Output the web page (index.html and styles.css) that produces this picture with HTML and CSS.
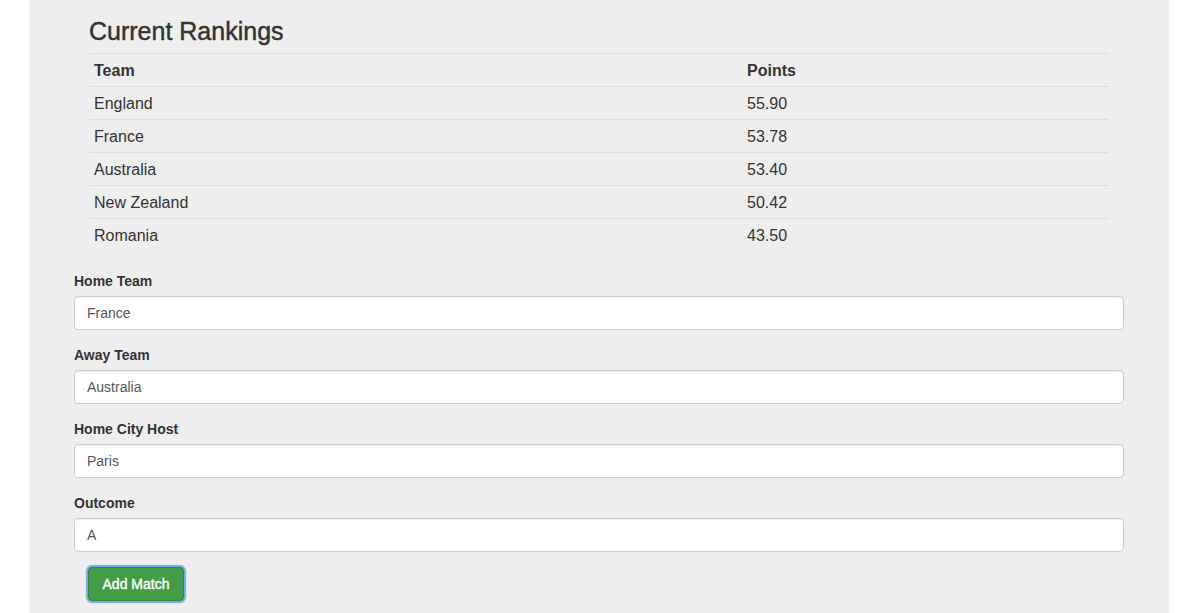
FILE: index.html
```html
<!DOCTYPE html>
<html>
<head>
<meta charset="utf-8">
<link rel="stylesheet" href="styles.css">
</head>
<body>
<div class="panel">
  <section class="rankings">
    <h2 class="title">Current Rankings</h2>
    <table class="table">
      <thead>
        <tr><th class="col-team">Team</th><th>Points</th></tr>
      </thead>
      <tbody>
        <tr><td>England</td><td>55.90</td></tr>
        <tr><td>France</td><td>53.78</td></tr>
        <tr><td>Australia</td><td>53.40</td></tr>
        <tr><td>New Zealand</td><td>50.42</td></tr>
        <tr><td>Romania</td><td>43.50</td></tr>
      </tbody>
    </table>
  </section>
  <form class="match-form">
    <div class="form-group">
      <label class="label">Home Team</label>
      <input class="input" type="text" value="France">
    </div>
    <div class="form-group">
      <label class="label">Away Team</label>
      <input class="input" type="text" value="Australia">
    </div>
    <div class="form-group">
      <label class="label">Home City Host</label>
      <input class="input" type="text" value="Paris">
    </div>
    <div class="form-group">
      <label class="label">Outcome</label>
      <input class="input" type="text" value="A">
    </div>
    <div class="actions">
      <button class="btn" type="button">Add Match</button>
    </div>
  </form>
</div>
</body>
</html>
```
FILE: styles.css
```css
* { box-sizing: border-box; }
html, body {
  margin: 0;
  padding: 0;
  background: #fff;
  font-family: "Liberation Sans", Arial, sans-serif;
  color: #333;
}
.panel {
  width: 1140px;
  margin-left: 29px;
  background: #eeeeee;
  min-height: 613px;
  display: flex;
  flex-direction: column;
}
.rankings {
  padding: 0 60px;
}
.title {
  margin: 18px 0 9px;
  font-size: 25px;
  line-height: 26px;
  font-weight: 500;
  -webkit-text-stroke: 0.45px #333;
}
.table {
  width: 100%;
  border-collapse: collapse;
  font-size: 16px;
  line-height: 22px;
  margin-bottom: 20px;
}
.table th, .table td {
  text-align: left;
  padding: 6px 5px 4px;
  border-top: 1px solid #dddddd;
  vertical-align: top;
}
.table th { font-weight: bold; }
.col-team { width: 653px; }
.match-form {
  padding: 0 45px;
}
.form-group {
  margin-bottom: 15px;
  display: flex;
  flex-direction: column;
}
.label {
  font-size: 14px;
  line-height: 20px;
  font-weight: bold;
  margin-bottom: 5px;
}
.input {
  height: 34px;
  width: 100%;
  padding: 6px 12px;
  font-family: inherit;
  font-size: 14px;
  line-height: 20px;
  color: #555;
  background: #fff;
  border: 1px solid #cccccc;
  border-radius: 4px;
  box-shadow: inset 0 1px 1px rgba(0,0,0,.075);
  outline: none;
}
.actions {
  padding-left: 14px;
}
.btn {
  height: 34px;
  padding: 6px 10px;
  font-family: inherit;
  font-size: 14px;
  line-height: 20px;
  color: #fff;
  background: #449d44;
  border: 1px solid #398439;
  border-radius: 4px;
  box-shadow: 0 0 1px 2px rgba(90,157,235,0.85);
  width: 96px;
  -webkit-text-stroke: 0.35px #fff;
}
```
